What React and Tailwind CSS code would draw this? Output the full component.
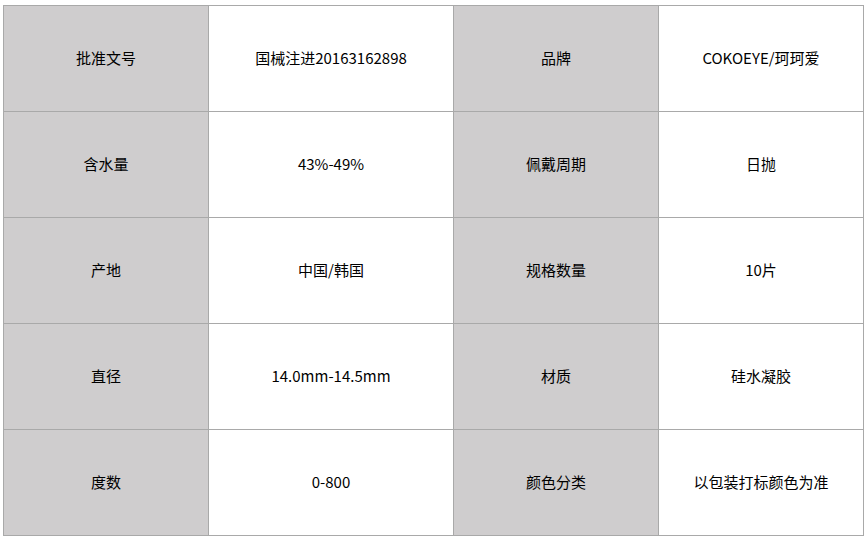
import React from "react";

const rows = [
  ["批准文号", "国械注进20163162898", "品牌", "COKOEYE/珂珂爱"],
  ["含水量", "43%-49%", "佩戴周期", "日抛"],
  ["产地", "中国/韩国", "规格数量", "10片"],
  ["直径", "14.0mm-14.5mm", "材质", "硅水凝胶"],
  ["度数", "0-800", "颜色分类", "以包装打标颜色为准"],
];

export default function App() {
  return (
    <div className="w-[867px] h-[540px] bg-white pt-[5px] pl-[3px]" style={{ fontFamily: '"Noto Sans CJK SC", "Noto Sans", sans-serif' }}>
      <div className="grid grid-cols-[205px_245px_205px_205px] border-l border-t border-[#a9a9a9] w-[861px]">
        {rows.map((r, i) => (
          <React.Fragment key={i}>
            {r.map((t, j) => (
              <div
                key={j}
                className={
                  "h-[106px] flex items-center justify-center border-r border-b border-[#a9a9a9] text-[15px] text-black " +
                  (j % 2 === 0 ? "bg-[#cfcdce]" : "bg-white")
                }
              >
                {t}
              </div>
            ))}
          </React.Fragment>
        ))}
      </div>
    </div>
  );
}
